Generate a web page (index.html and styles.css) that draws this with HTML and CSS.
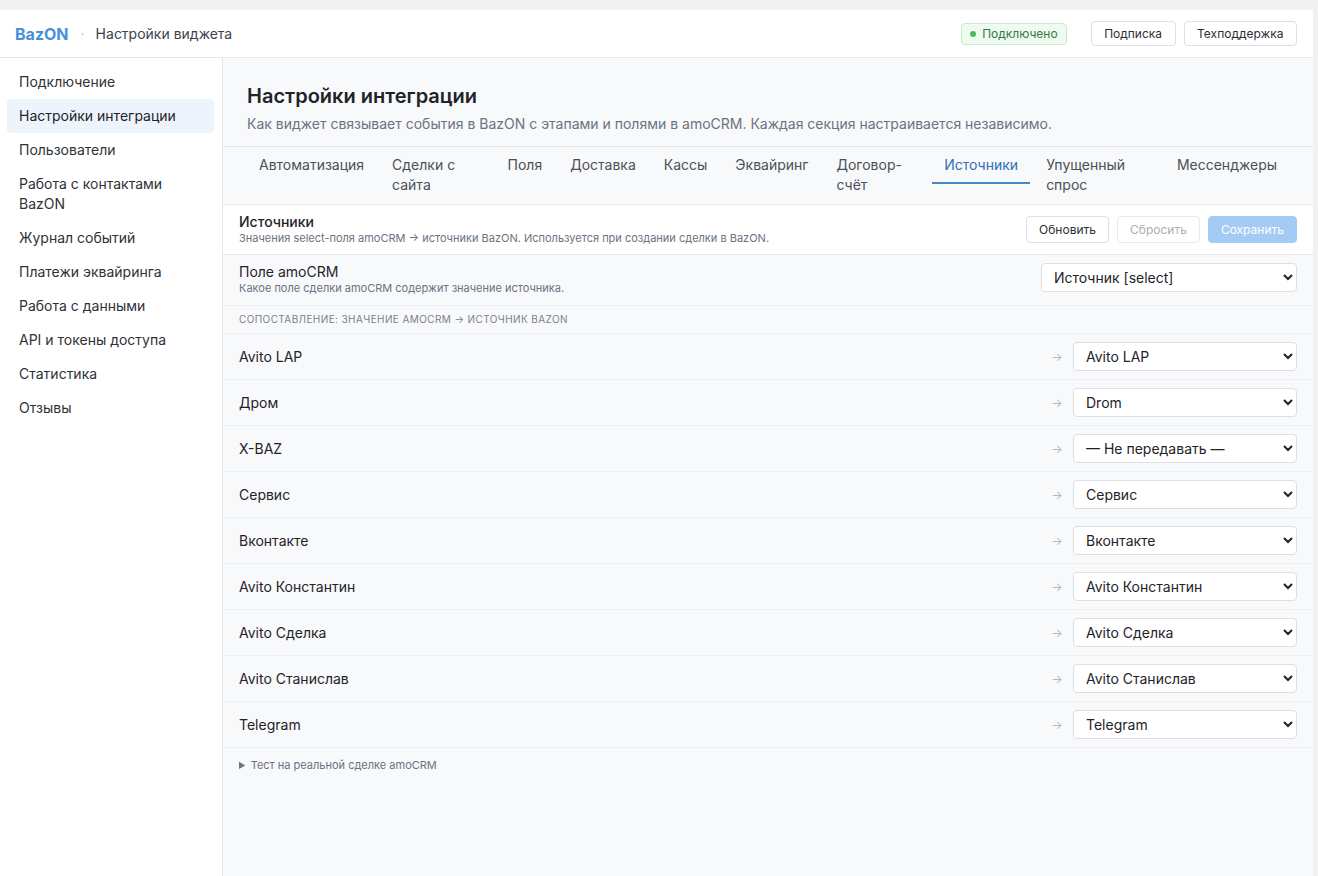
FILE: index.html
```html
<!DOCTYPE html>
<html lang="ru">
<head>
    <meta charset="UTF-8">
    <meta name="viewport" content="width=device-width, initial-scale=1.0">
    <title>BazON — Настройки виджета</title>
    <link rel="stylesheet" href="styles.css">
</head>
<body>
<div class="app">

    <header class="topbar">
        <div class="brand">
            <span class="logo">BazON</span>
            <span class="sep">·</span>
            <span class="page-name">Настройки виджета</span>
        </div>
        <div class="topbar-actions">
            <span class="status"><span class="dot"></span>Подключено</span>
            <button class="btn">Подписка</button>
            <button class="btn">Техподдержка</button>
        </div>
    </header>

    <div class="layout">
        <nav class="sidebar">
            <a class="nav-item">Подключение</a>
            <a class="nav-item active">Настройки интеграции</a>
            <a class="nav-item">Пользователи</a>
            <a class="nav-item">Работа с контактами BazON</a>
            <a class="nav-item">Журнал событий</a>
            <a class="nav-item">Платежи эквайринга</a>
            <a class="nav-item">Работа с данными</a>
            <a class="nav-item">API и токены доступа</a>
            <a class="nav-item">Статистика</a>
            <a class="nav-item">Отзывы</a>
        </nav>

        <main class="content">
            <div class="page-head">
                <h1>Настройки интеграции</h1>
                <p>Как виджет связывает события в BazON с этапами и полями в amoCRM. Каждая секция настраивается независимо.</p>
            </div>

            <div class="tabs">
                <a class="tab">Автоматизация</a>
                <a class="tab">Сделки с сайта</a>
                <a class="tab">Поля</a>
                <a class="tab">Доставка</a>
                <a class="tab">Кассы</a>
                <a class="tab">Эквайринг</a>
                <a class="tab">Договор-счёт</a>
                <a class="tab active">Источники</a>
                <a class="tab">Упущенный спрос</a>
                <a class="tab">Мессенджеры</a>
            </div>

            <section class="panel">
                <div class="panel-head">
                    <div>
                        <div class="panel-title">Источники</div>
                        <div class="panel-desc">Значения select-поля amoCRM → источники BazON. Используется при создании сделки в BazON.</div>
                    </div>
                    <div class="panel-actions">
                        <button class="btn btn-md">Обновить</button>
                        <button class="btn btn-md" disabled>Сбросить</button>
                        <button class="btn btn-md btn-primary" disabled>Сохранить</button>
                    </div>
                </div>

                <div class="field-row">
                    <div>
                        <div class="field-title">Поле amoCRM</div>
                        <div class="field-desc">Какое поле сделки amoCRM содержит значение источника.</div>
                    </div>
                    <select class="select select-wide">
                        <option>Источник [select]</option>
                    </select>
                </div>

                <div class="map-caption">Сопоставление: значение amoCRM → источник BazON</div>

                <div class="map-row">
                    <span class="map-label">Avito LAP</span>
                    <span class="map-arrow">→</span>
                    <select class="select"><option>Avito LAP</option></select>
                </div>
                <div class="map-row">
                    <span class="map-label">Дром</span>
                    <span class="map-arrow">→</span>
                    <select class="select"><option>Drom</option></select>
                </div>
                <div class="map-row">
                    <span class="map-label">X-BAZ</span>
                    <span class="map-arrow">→</span>
                    <select class="select"><option>— Не передавать —</option></select>
                </div>
                <div class="map-row">
                    <span class="map-label">Сервис</span>
                    <span class="map-arrow">→</span>
                    <select class="select"><option>Сервис</option></select>
                </div>
                <div class="map-row">
                    <span class="map-label">Вконтакте</span>
                    <span class="map-arrow">→</span>
                    <select class="select"><option>Вконтакте</option></select>
                </div>
                <div class="map-row">
                    <span class="map-label">Avito Константин</span>
                    <span class="map-arrow">→</span>
                    <select class="select"><option>Avito Константин</option></select>
                </div>
                <div class="map-row">
                    <span class="map-label">Avito Сделка</span>
                    <span class="map-arrow">→</span>
                    <select class="select"><option>Avito Сделка</option></select>
                </div>
                <div class="map-row">
                    <span class="map-label">Avito Станислав</span>
                    <span class="map-arrow">→</span>
                    <select class="select"><option>Avito Станислав</option></select>
                </div>
                <div class="map-row">
                    <span class="map-label">Telegram</span>
                    <span class="map-arrow">→</span>
                    <select class="select"><option>Telegram</option></select>
                </div>

                <details class="test-box">
                    <summary>Тест на реальной сделке amoCRM</summary>
                </details>
            </section>
        </main>
    </div>

</div>
</body>
</html>
```

FILE: styles.css
```css
:root {
    --page-bg: #f1f1f2;
    --main-bg: #f8f9fb;
    --border: #e5e7eb;
    --text: #1f2328;
    --muted: #6b7280;
    --brand: #4a90d9;
    --accent: #2f6fb5;
}

* {
    box-sizing: border-box;
}

body {
    margin: 0;
    padding: 10px 5px 0 0;
    background-color: var(--page-bg);
    font-family: 'Inter', 'Noto Sans', sans-serif;
    color: var(--text);
    font-size: 14px;
}

.app {
    display: flex;
    flex-direction: column;
    height: calc(100vh - 10px);
    background-color: var(--main-bg);
}

/* top bar */
.topbar {
    display: flex;
    align-items: center;
    justify-content: space-between;
    height: 48px;
    padding: 0 16px 0 15px;
    background-color: #fff;
    border-bottom: 1px solid var(--border);
}

.brand {
    display: flex;
    align-items: center;
}

.logo {
    font-size: 16px;
    font-weight: 700;
    color: var(--brand);
}

.sep {
    color: #b8bcc3;
    margin: 0 11px 0 12px;
}

.page-name {
    color: #3d4249;
}

.topbar-actions {
    display: flex;
    align-items: center;
    gap: 8px;
}

.topbar-actions .btn {
    padding: 0 12.5px;
}

.status {
    display: flex;
    align-items: center;
    gap: 6px;
    height: 22px;
    padding: 0 8px;
    margin-right: 16px;
    font-size: 12px;
    color: #2f7d3f;
    background-color: #effaf1;
    border: 1px solid #c8ebcf;
    border-radius: 4px;
}

.dot {
    width: 6px;
    height: 6px;
    border-radius: 50%;
    background-color: #4cbb5f;
}

.btn {
    height: 25px;
    padding: 0 12px;
    font-family: inherit;
    font-size: 12px;
    color: #2b2f35;
    background-color: #fff;
    border: 1px solid #dcdfe4;
    border-radius: 4px;
    cursor: pointer;
}

.btn-md {
    height: 27px;
}

.btn:disabled {
    color: #a9adb4;
    border-color: #e8eaed;
    cursor: default;
}

.btn-primary,
.btn-primary:disabled {
    color: #fff;
    background-color: #a4cbf3;
    border-color: #a4cbf3;
}

/* layout */
.layout {
    display: flex;
    flex: 1;
    min-height: 0;
}

.sidebar {
    width: 223px;
    flex-shrink: 0;
    padding: 7px 8px 7px 7px;
    background-color: #fff;
    border-right: 1px solid var(--border);
}

.nav-item {
    display: block;
    padding: 7px 12px;
    line-height: 20px;
    color: #2e3238;
    border-radius: 4px;
    cursor: pointer;
}

.nav-item.active {
    background-color: #eef4fc;
    color: #1f2328;
}

.content {
    flex: 1;
    min-width: 0;
    overflow: hidden;
}

.page-head {
    padding: 24px 24px 12px;
    border-bottom: 1px solid var(--border);
}

.page-head h1 {
    margin: 0;
    font-size: 20px;
    line-height: 28px;
    font-weight: 600;
}

.page-head p {
    margin: 4px 0 0;
    line-height: 20px;
    color: var(--muted);
}

/* tabs */
.tabs {
    display: flex;
    align-items: flex-start;
    gap: 4px;
    padding: 8px 24px 0;
    border-bottom: 1px solid var(--border);
}

.tab {
    padding: 0 12px 7px;
    line-height: 20px;
    color: #4b5058;
    border-bottom: 2px solid transparent;
    cursor: pointer;
}

.tab.active {
    color: var(--accent);
    border-bottom-color: #4a86c7;
}

/* sources panel */
.panel-head {
    display: flex;
    align-items: center;
    justify-content: space-between;
    padding: 8px 16px;
    background-color: #fff;
    border-bottom: 1px solid var(--border);
}

.panel-title {
    font-weight: 500;
    line-height: 18px;
}

.panel-desc,
.field-desc {
    font-size: 11px;
    line-height: 15px;
    color: var(--muted);
}

.panel-actions {
    display: flex;
    gap: 8px;
}

.field-row {
    display: flex;
    align-items: flex-start;
    justify-content: space-between;
    padding: 8px 16px 9px;
    border-bottom: 1px solid #eef0f2;
}

.field-title {
    line-height: 18px;
}

.select {
    width: 224px;
    height: 29px;
    padding: 0 8px;
    font-family: inherit;
    font-size: 14px;
    color: var(--text);
    background-color: #fff;
    border: 1px solid #dcdfe4;
    border-radius: 4px;
}

.select-wide {
    width: 256px;
}

.map-caption {
    padding: 8px 16px;
    font-size: 10px;
    line-height: 11px;
    letter-spacing: 0.04em;
    text-transform: uppercase;
    color: #7b8089;
    border-bottom: 1px solid #eef0f2;
}

.map-row {
    display: flex;
    align-items: center;
    gap: 8px;
    padding: 8px 16px;
    border-bottom: 1px solid #eef0f2;
}

.map-label {
    flex: 1;
}

.map-arrow {
    width: 16px;
    text-align: center;
    font-size: 12px;
    color: #b3b7bd;
}

.test-box {
    padding: 10px 16px;
    font-size: 11px;
    color: var(--muted);
}

.test-box summary {
    cursor: pointer;
}
```
